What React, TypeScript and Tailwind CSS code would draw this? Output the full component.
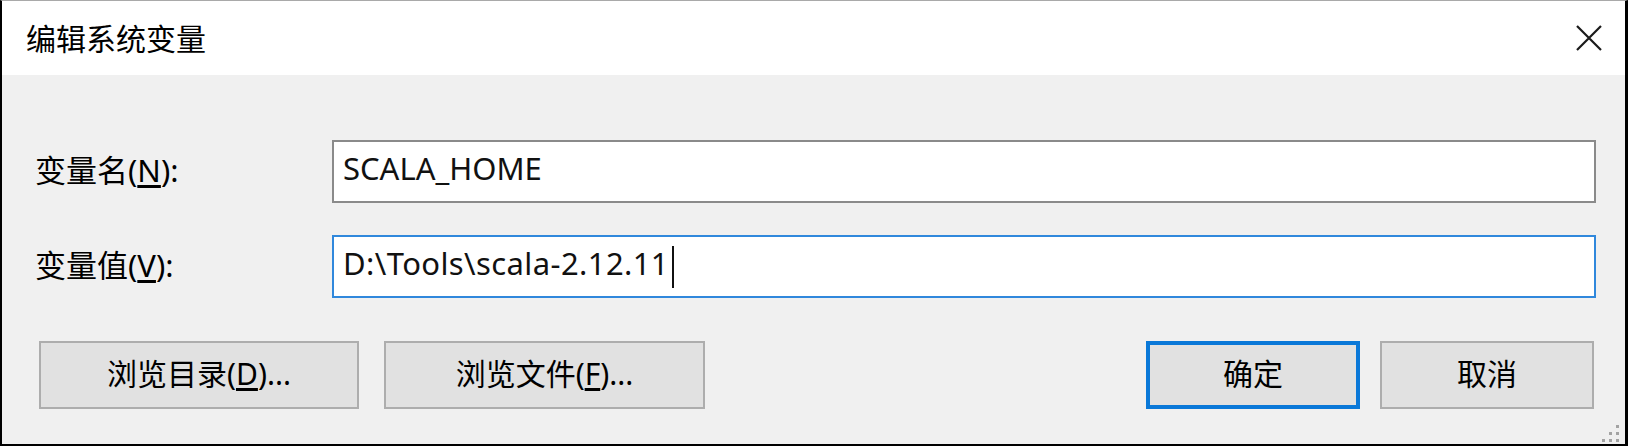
import React from "react";

const font = "font-['Noto_Sans','Noto_Sans_CJK_SC',sans-serif]";

function CloseIcon() {
  return (
    <svg width="26" height="26" viewBox="0 0 26 26" className="block">
      <path d="M1 1 L25 25 M25 1 L1 25" stroke="#1a1a1a" strokeWidth="2.2" fill="none" />
    </svg>
  );
}

function SizeGrip() {
  const dots = [
    [14, 0],
    [7, 7],
    [14, 7],
    [0, 14],
    [7, 14],
    [14, 14],
  ];
  return (
    <svg width="18" height="18" viewBox="0 0 18 18" className="absolute right-[5px] bottom-[1px]">
      {dots.map(([x, y]) => (
        <rect key={`${x}-${y}`} x={x} y={y} width="3" height="3" fill="#a3a3a3" />
      ))}
    </svg>
  );
}

function Field({
  label,
  hotkey,
  value,
  focused,
}: {
  label: string;
  hotkey: string;
  value: string;
  focused?: boolean;
}) {
  return (
    <div className="flex items-center">
      <div className="w-[297px] shrink-0 text-[31px] leading-none text-black pb-[2px]">
        {label}(<u className="underline-offset-[3px]">{hotkey}</u>):
      </div>
      <div
        className={
          focused
            ? "flex-1 h-[63px] bg-white border-2 border-[#3088dc] flex items-center pl-[9px] pb-[6px]"
            : "flex-1 h-[63px] bg-white border-2 border-[#8a8a8a] flex items-center pl-[9px] pb-[6px]"
        }
      >
        <span
          className={
            focused
              ? "text-[31px] leading-none text-[#111] tracking-[0.4px]"
              : "text-[31px] leading-none text-[#111]"
          }
        >
          {value}
        </span>
        {focused && <span className="ml-[3px] w-[2px] h-[42px] bg-[#111] mt-[6px]" />}
      </div>
    </div>
  );
}

function Button({
  children,
  primary,
  width,
}: {
  children: React.ReactNode;
  primary?: boolean;
  width: string;
}) {
  return (
    <button
      className={
        (primary
          ? "border-[4px] border-[#0a78d8] "
          : "border-2 border-[#adadad] ") +
        width +
        " h-[68px] bg-[#e1e1e1] flex items-center justify-center text-[30px] leading-none text-black pb-[2px]"
      }
    >
      {children}
    </button>
  );
}

export default function App() {
  return (
    <div
      className={`${font} relative w-[1628px] h-[446px] flex flex-col bg-[#f0f0f0] border-l-2 border-r-[3px] border-b-2 border-t border-black border-t-[#a9a9a9]`}
    >
      {/* Title bar */}
      <div className="h-[74px] bg-white flex items-center justify-between pl-[24px] pr-[23px]">
        <span className="text-[30px] leading-none text-black font-['Noto_Sans_CJK_SC',sans-serif] pb-[2px]">
          编辑系统变量
        </span>
        <CloseIcon />
      </div>

      {/* Fields */}
      <div className="flex flex-col gap-[32px] pt-[65px] pl-[33px] pr-[29px]">
        <Field label="变量名" hotkey="N" value="SCALA_HOME" />
        <Field label="变量值" hotkey="V" value="D:\Tools\scala-2.12.11" focused />
      </div>

      {/* Buttons */}
      <div className="flex items-center justify-between pt-[43px] pl-[37px] pr-[31px]">
        <div className="flex gap-[25px]">
          <Button width="w-[320px]">
            浏览目录(<u className="underline-offset-[3px]">D</u>)...
          </Button>
          <Button width="w-[321px]">
            浏览文件(<u className="underline-offset-[3px]">F</u>)...
          </Button>
        </div>
        <div className="flex gap-[20px]">
          <Button width="w-[214px]" primary>
            确定
          </Button>
          <Button width="w-[214px]">取消</Button>
        </div>
      </div>

      <SizeGrip />
    </div>
  );
}
